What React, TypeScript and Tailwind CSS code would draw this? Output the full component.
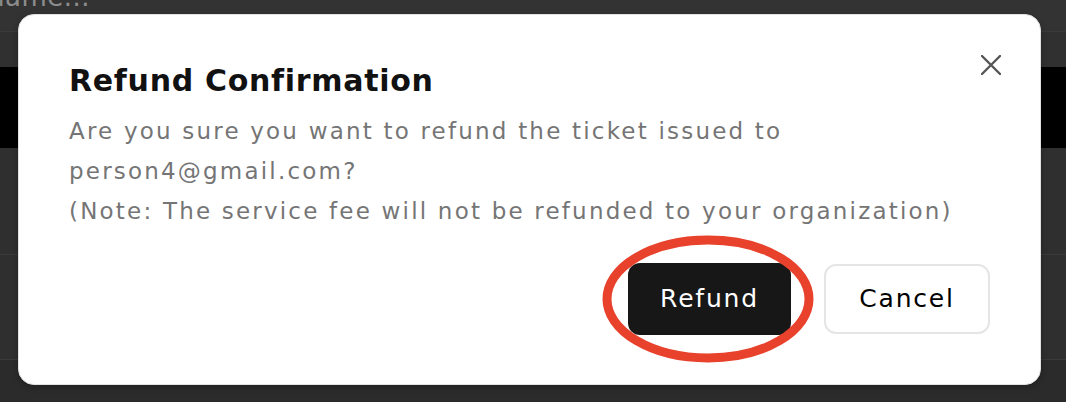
function Backdrop() {
  return (
    <div className="flex h-full flex-col">
      <div className="h-[32px] overflow-hidden border-b border-[#3a3a3a] bg-[#333333]">
        <p className="-ml-[12px] -mt-[19px] text-[26px] leading-[32px] tracking-[0.5px] text-[#8c8c8c]">name...</p>
      </div>
      <div className="h-[35px] bg-[#303030]" />
      <div className="h-[81px] bg-black" />
      <div className="h-[107px] border-b border-[#3a3a3a] bg-[#2f2f2f]" />
      <div className="h-[105px] border-b border-[#3a3a3a] bg-[#2f2f2f]" />
      <div className="flex-1 bg-[#2b2b2b]" />
    </div>
  );
}

export default function App() {
  return (
    <div className="relative h-[402px] w-[1066px] overflow-hidden font-['DejaVu_Sans',sans-serif]">
      <Backdrop />
      <div className="absolute left-[18px] top-[14px] h-[371px] w-[1023px] rounded-[16px] border border-[#e2e2e2] bg-white pl-[50px] pr-[50px] pt-[46px] shadow-[0_2px_6px_rgba(0,0,0,0.25)]">
        <button className="absolute left-[962px] top-[40px] text-[#555555]">
          <svg width="20" height="20" viewBox="0 0 20 20" className="block">
            <path d="M1 1L19 19M19 1L1 19" stroke="currentColor" strokeWidth="2.4" strokeLinecap="round" />
          </svg>
        </button>
        <h2 className="text-[30px] font-bold leading-[40px] tracking-[0.7px] text-[#111111]">Refund Confirmation</h2>
        <p className="mt-[10px] text-[23px] leading-[40px] tracking-[2.2px] text-[#757575]">
          Are you sure you want to refund the ticket issued to
          <br />
          person4@gmail.com?
          <br />
          (Note: The service fee will not be refunded to your organization)
        </p>
        <div className="mt-[32px] flex justify-end gap-[33px]">
          <div className="relative">
            <button className="h-[72px] w-[163px] rounded-[12px] bg-[#171717] text-[25px] tracking-[1.8px] text-white">
              Refund
            </button>
            <svg
              className="pointer-events-none absolute -left-[30px] -top-[29px]"
              width="221"
              height="130"
              viewBox="0 0 221 130"
            >
              <ellipse cx="110" cy="65" rx="101" ry="59" fill="none" stroke="#e8412c" strokeWidth="9" />
            </svg>
          </div>
          <button className="mt-[1px] h-[70px] w-[166px] rounded-[12px] border-2 border-[#e5e5e5] bg-white text-[25px] tracking-[1.8px] text-black">
            Cancel
          </button>
        </div>
      </div>
    </div>
  );
}
